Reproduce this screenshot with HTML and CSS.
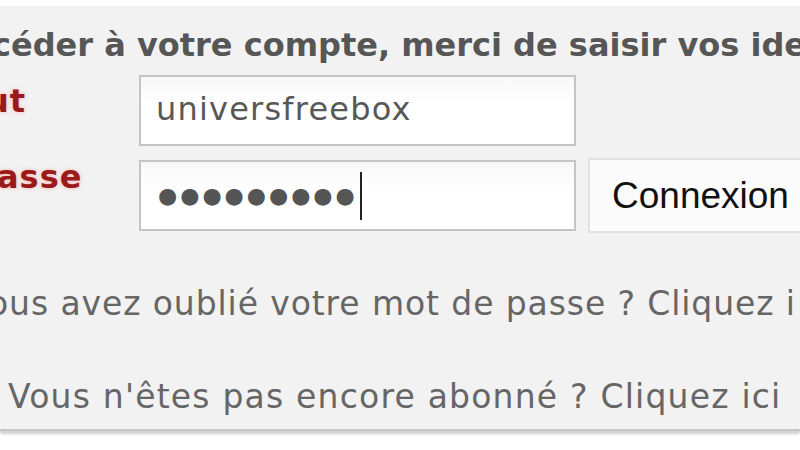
FILE: index.html
```html
<!DOCTYPE html>
<html lang="fr">
<head>
<meta charset="utf-8">
<title>Connexion</title>
<link rel="stylesheet" href="styles.css">
</head>
<body>
<div class="panel">
  <p class="intro">céder à votre compte, merci de saisir vos ide</p>
  <div class="form">
    <div class="row">
      <span class="label login">ut</span>
      <div class="field"><span class="value">universfreebox</span></div>
    </div>
    <div class="row">
      <span class="label pass">asse</span>
      <div class="field"><span class="dots">●●●●●●●●●</span><span class="caret"></span></div>
      <div class="button">Connexion</div>
    </div>
  </div>
  <p class="link first">ous avez oublié votre mot de passe ? Cliquez i</p>
  <p class="link second">Vous n'êtes pas encore abonné ? Cliquez ici</p>
</div>
</body>
</html>
```
FILE: styles.css
```css
html, body {
  margin: 0;
  padding: 0;
  background: #ffffff;
  width: 800px;
  height: 450px;
  overflow: hidden;
}
body {
  font-family: "DejaVu Sans", Verdana, sans-serif;
  padding-top: 6px;
}
.panel {
  background: #f2f2f2;
  height: 425px;
  box-sizing: border-box;
  overflow: hidden;
  box-shadow: 0 3px 3px rgba(0,0,0,0.2);
  border-bottom: 2px solid #c6c6c6;
  padding-top: 18px;
}
.intro {
  margin: 0 0 0 -8px;
  font-size: 32px;
  line-height: 42px;
  letter-spacing: 0;
  font-weight: bold;
  color: #565656;
  white-space: nowrap;
}
.form {
  margin-top: 9px;
  display: flex;
  flex-direction: column;
  gap: 12px;
}
.row {
  display: flex;
  align-items: center;
  white-space: nowrap;
}
.label {
  flex: none;
  font-size: 32px;
  color: #9a1a1a;
  font-weight: bold;
  letter-spacing: 1px;
  text-shadow: 0 0 4px rgba(255,120,120,0.5);
  align-self: flex-start;
  box-sizing: border-box;
}
.login {
  width: 153px;
  margin-left: -14px;
  padding-top: 7px;
}
.pass {
  width: 142px;
  margin-left: -3px;
  padding-top: 0;
}
.field {
  width: 437px;
  height: 71px;
  flex: none;
  box-sizing: border-box;
  border: 2px solid #c4c4c4;
  background: linear-gradient(#f7f7f7, #ffffff 40%);
  display: flex;
  align-items: center;
  padding-left: 15px;
}
.value {
  font-size: 32px;
  letter-spacing: 1.2px;
  color: #585858;
  margin-top: -4px;
}
.dots {
  font-size: 22px;
  letter-spacing: 3px;
  color: #555;
  margin-left: 2px;
}
.caret {
  width: 2px;
  height: 48px;
  background: #222;
  margin-left: 2px;
}
.button {
  margin-left: 12px;
  width: 240px;
  height: 75px;
  flex: none;
  box-sizing: border-box;
  border: 2px solid #e2e2e2;
  background: #fbfbfb;
  font-family: "Liberation Sans", Arial, sans-serif;
  font-size: 37px;
  color: #111;
  display: flex;
  align-items: center;
  padding-left: 22px;
}
.link {
  margin: 0;
  font-size: 33px;
  letter-spacing: 1.2px;
  color: #666666;
  white-space: nowrap;
}
.first {
  margin-top: 51px;
  margin-left: -12px;
  letter-spacing: 0.9px;
}
.second {
  margin-top: 54px;
  margin-left: 8px;
}
```
